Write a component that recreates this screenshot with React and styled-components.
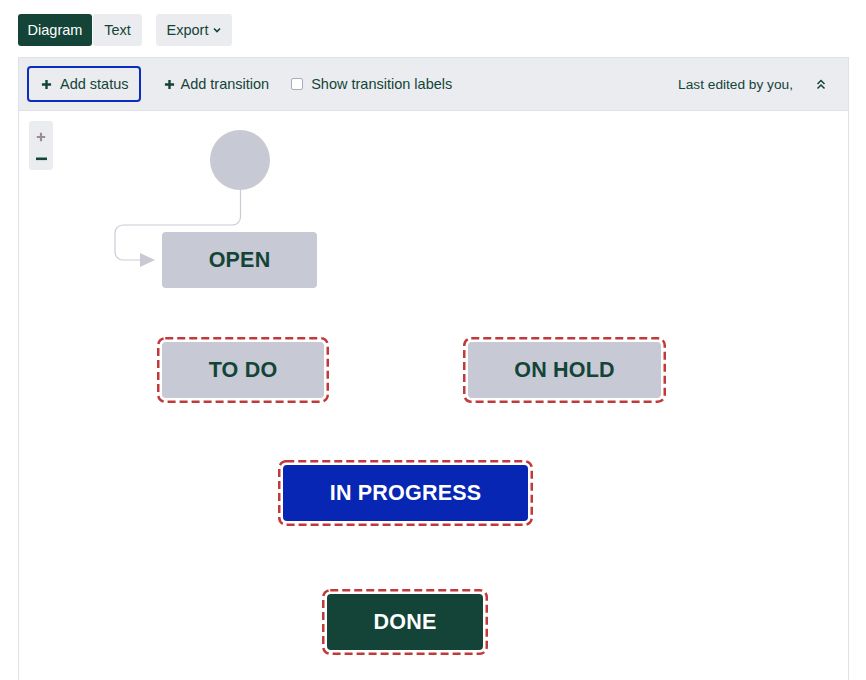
import React from "react";
import styled, { createGlobalStyle } from "styled-components";

const Global = createGlobalStyle`
  html, body { margin: 0; padding: 0; background: #fff; }
  body { font-family: "Liberation Sans", Arial, sans-serif; color: #134437; }
  * { box-sizing: border-box; }
`;

const GREEN = "#134437";
const GRAY = "#c7c9d5";

const Page = styled.div`
  padding: 14px 0 0 18px;
  width: 866px;
  height: 680px;
  overflow: hidden;
  display: flex;
  flex-direction: column;
`;

const TopBar = styled.div`
  display: flex;
  align-items: center;
  height: 32px;
  margin-bottom: 11px;
`;

const TabGroup = styled.div`
  display: flex;
  gap: 1px;
  margin-right: 14px;
`;

const Tab = styled.button`
  height: 32px;
  width: ${(p) => p.$w}px;
  padding: 0;
  border: none;
  border-radius: 3px;
  font: 14.5px "Liberation Sans", Arial, sans-serif;
  background: ${(p) => (p.$active ? GREEN : "#ebecf0")};
  color: ${(p) => (p.$active ? "#fff" : GREEN)};
  display: flex;
  align-items: center;
  justify-content: center;
  gap: 5px;
`;

const Panel = styled.div`
  width: 831px;
  flex: 1;
  border: 1px solid #dfe1e6;
  border-bottom: none;
  display: flex;
  flex-direction: column;
`;

const Toolbar = styled.div`
  height: 53px;
  background: #ebecf0;
  border-bottom: 1px solid #dfe1e6;
  display: flex;
  align-items: center;
  padding: 0 22px 0 8px;
`;

const ToolButton = styled.button`
  height: 36px;
  padding: 0 ${(p) => (p.$focused ? 10 : 12)}px 0 12px;
  border: 2px solid ${(p) => (p.$focused ? "#0b2dbf" : "transparent")};
  border-radius: 4px;
  background: transparent;
  font: 14.5px "Liberation Sans", Arial, sans-serif;
  color: ${GREEN};
  display: flex;
  align-items: center;
  gap: ${(p) => (p.$focused ? 8 : 6)}px;
  margin-right: ${(p) => p.$mr || 0}px;
`;

const CheckLabel = styled.label`
  display: flex;
  align-items: center;
  gap: 8px;
  font-size: 14.5px;
  color: ${GREEN};
  margin-left: 8px;
`;

const Box = styled.span`
  width: 12px;
  height: 12px;
  border: 1px solid #a5adba;
  border-radius: 2px;
  background: #fff;
`;

const Spacer = styled.div`
  flex: 1;
`;

const Meta = styled.span`
  font-size: 13.7px;
  color: ${GREEN};
  margin-right: 23px;
`;

const Canvas = styled.div`
  position: relative;
  flex: 1;
  background: #fff;
`;

const ZoomCtl = styled.div`
  position: absolute;
  left: 10px;
  top: 10px;
  width: 24px;
  height: 49px;
  background: #ebecf0;
  border-radius: 3px;
  display: flex;
  flex-direction: column;
  align-items: center;
  justify-content: space-around;
  padding: 3px 0 2px;
`;

const Circle = styled.div`
  position: absolute;
  left: 191px;
  top: 19px;
  width: 60px;
  height: 60px;
  border-radius: 50%;
  background: ${GRAY};
`;

const Wire = styled.svg`
  position: absolute;
  left: 0;
  top: 0;
  overflow: visible;
`;

const Dash = styled.div`
  position: absolute;
  left: ${(p) => p.$x}px;
  top: ${(p) => p.$y}px;
  width: ${(p) => p.$w}px;
  height: 66px;
  padding: 5px;
  display: flex;
`;

const DashRing = styled.svg`
  position: absolute;
  left: 0;
  top: 0;
  pointer-events: none;
`;

const Node = styled.div`
  flex: 1;
  border-radius: 4px;
  background: ${(p) => p.$bg};
  color: ${(p) => p.$fg};
  font: bold 21.5px "Liberation Sans", Arial, sans-serif;
  letter-spacing: 0.2px;
  display: flex;
  align-items: center;
  justify-content: center;
`;

const PlainNode = styled(Node)`
  position: absolute;
  left: ${(p) => p.$x}px;
  top: ${(p) => p.$y}px;
  width: ${(p) => p.$w}px;
  height: 56px;
`;

const Plus = ({ color = GREEN, size = 11 }) => (
  <svg width={size} height={size} viewBox="0 0 12 12">
    <path d="M6 1v10M1 6h10" stroke={color} strokeWidth="2.6" />
  </svg>
);

const Chevron = () => (
  <svg width="8" height="6" viewBox="0 0 8 6">
    <path d="M1 1.5l3 3 3-3" stroke={GREEN} strokeWidth="1.6" fill="none" />
  </svg>
);

const DoubleUp = () => (
  <svg width="10" height="11" viewBox="0 0 10 11">
    <path d="M1.5 5L5 1.5 8.5 5M1.5 9.5L5 6 8.5 9.5" stroke={GREEN} strokeWidth="1.5" fill="none" />
  </svg>
);

const Status = ({ x, y, w, bg, fg, children }) => (
  <Dash $x={x} $y={y} $w={w}>
    <DashRing width={w} height={66}>
      <rect
        x="1.25"
        y="1.25"
        width={w - 2.5}
        height={63.5}
        rx="7"
        fill="none"
        stroke="#c2393b"
        strokeWidth="2.5"
        strokeDasharray="8 4"
      />
    </DashRing>
    <Node $bg={bg} $fg={fg}>{children}</Node>
  </Dash>
);

export default function App() {
  return (
    <>
      <Global />
      <Page>
        <TopBar>
          <TabGroup>
            <Tab $active $w={74}>Diagram</Tab>
            <Tab $w={49}>Text</Tab>
          </TabGroup>
          <Tab $w={76}>
            Export <Chevron />
          </Tab>
        </TopBar>
        <Panel>
          <Toolbar>
            <ToolButton $focused $mr={9}>
              <Plus />
              Add status
            </ToolButton>
            <ToolButton>
              <Plus />
              Add transition
            </ToolButton>
            <CheckLabel>
              <Box />
              Show transition labels
            </CheckLabel>
            <Spacer />
            <Meta>Last edited by you,</Meta>
            <DoubleUp />
          </Toolbar>
          <Canvas>
            <ZoomCtl>
              <Plus color="#9b8b96" size={10} />
              <svg width="11" height="4" viewBox="0 0 11 4">
                <rect x="0" y="0.5" width="11" height="2.6" fill={GREEN} />
              </svg>
            </ZoomCtl>
            <Circle />
            <Wire width="260" height="170">
              <path
                d="M221.5 79V106a8 8 0 0 1 -8 8H104a8 8 0 0 0 -8 8V141a8 8 0 0 0 8 8H122"
                stroke="#c9ccd6"
                strokeWidth="1.2"
                fill="none"
              />
              <path d="M121 142L136 149L121 156Z" fill={GRAY} />
            </Wire>
            <PlainNode $x={143} $y={121} $w={155} $bg={GRAY} $fg={GREEN}>
              OPEN
            </PlainNode>
            <Status x={138} y={226} w={172} bg={GRAY} fg={GREEN}>TO DO</Status>
            <Status x={444} y={226} w={203} bg={GRAY} fg={GREEN}>ON HOLD</Status>
            <Status x={259} y={349} w={255} bg="#0726b3" fg="#fff">IN PROGRESS</Status>
            <Status x={303} y={478} w={166} bg={GREEN} fg="#fff">DONE</Status>
          </Canvas>
        </Panel>
      </Page>
    </>
  );
}
